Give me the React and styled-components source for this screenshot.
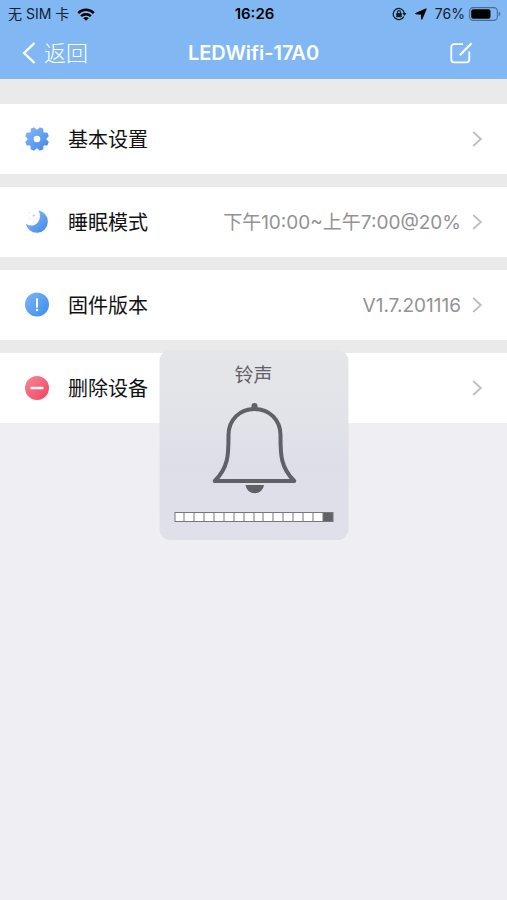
import styled, { createGlobalStyle } from "styled-components";

const GlobalStyle = createGlobalStyle`
  * {
    box-sizing: border-box;
  }

  body {
    margin: 0;
    background: #eeeef3;
    font-family: Inter, "Noto Sans CJK SC", sans-serif;
  }

  button {
    margin: 0;
    border: none;
    background: none;
    font-family: inherit;
    cursor: pointer;
  }

  svg {
    display: block;
    flex: none;
  }
`;

const Header = styled.header`
  background: #81b8f3;
`;

const StatusBar = styled.div`
  display: grid;
  grid-template-columns: 1fr auto 1fr;
  align-items: center;
  height: 28px;
  padding: 0 6px 0 8px;
  font-size: 14px;
  line-height: 20px;
  color: #10202f;
`;

const StatusGroup = styled.div`
  display: flex;
  align-items: center;
  justify-content: ${(p) => (p.$end ? "flex-end" : "flex-start")};
  gap: 8px;
`;

const BatteryLevel = styled.span`
  display: flex;
  align-items: center;
  gap: 4px;
`;

const Clock = styled.time`
  font-size: 15px;
  font-weight: 600;
  color: #000;
`;

const NavBar = styled.nav`
  display: grid;
  grid-template-columns: 1fr auto 1fr;
  align-items: center;
  height: 51px;
  padding: 0 22px 2px;
  color: white;
`;

const BackButton = styled.button`
  justify-self: start;
  display: flex;
  align-items: center;
  gap: 8px;
  padding: 0;
  color: white;
  font-size: 22px;
  line-height: 28px;
  font-weight: 300;
`;

const Title = styled.h1`
  margin: 0;
  font-size: 20px;
  line-height: 28px;
  font-weight: 600;
`;

const EditButton = styled.button`
  justify-self: end;
  padding: 0 12px;
  color: white;
`;

const List = styled.main`
  display: flex;
  flex-direction: column;
  gap: 13px;
  padding: 25px 0 0;
  background: #eaeaea;
`;

const Row = styled.button`
  display: flex;
  align-items: center;
  width: 100%;
  height: 70px;
  padding: 0 24px;
  background: white;
  text-align: left;
`;

const RowLabel = styled.span`
  flex: 1;
  padding-top: 2px;
  margin-left: 18px;
  font-size: 20px;
  line-height: 28px;
  color: #111;
`;

const RowValue = styled.span`
  padding-top: 2px;
  margin-right: 11px;
  font-size: 19px;
  line-height: 28px;
  color: #929292;
`;

const Hud = styled.div`
  position: fixed;
  top: 350px;
  left: 50%;
  transform: translateX(-50%);
  display: flex;
  flex-direction: column;
  align-items: center;
  width: 189px;
  height: 190px;
  padding: 12px 15px 18px;
  border-radius: 11px;
  background: linear-gradient(#e4e6e9 0%, #e1e3e8 38%, #dddee8 60%, #dfe0ea 100%);
  color: #606166;
`;

const HudTitle = styled.div`
  font-size: 19px;
  line-height: 28px;
`;

const BellIcon = styled.svg`
  margin-top: 12px;
`;

const Meter = styled.div`
  display: grid;
  grid-template-columns: repeat(16, 1fr);
  gap: 1px;
  width: 100%;
  height: 10px;
  margin-top: auto;
  padding: 1px;
  background: #77777c;
`;

const Cell = styled.span`
  background: ${(p) => (p.$on ? "#606166" : "white")};
`;

function WifiIcon() {
  return (
    <svg width="18" height="13" viewBox="0 0 18 13" fill="none" stroke="#000" strokeWidth="2.5">
      <path d="M1.2 5.1a11 11 0 0 1 15.6 0" />
      <path d="M4.1 8.2a7 7 0 0 1 9.8 0" />
      <path d="M9 12.8 6.2 10.3a4 4 0 0 1 5.6 0z" fill="#000" stroke="none" />
    </svg>
  );
}

function RotationLockIcon() {
  return (
    <svg width="15" height="14" viewBox="0 0 15 14" fill="none" stroke="#10202f">
      <path d="M11.8 9.6A5.6 5.6 0 1 1 12.3 6" strokeWidth="1.3" />
      <path d="M10.2 6h4.4l-2.2 3z" fill="#10202f" stroke="none" />
      <rect x="4.2" y="6" width="5.6" height="4.3" rx=".5" fill="#10202f" stroke="none" />
      <path d="M5.5 6.5V5.2a1.5 1.5 0 0 1 3 0v1.3" strokeWidth="1.2" />
    </svg>
  );
}

function LocationIcon() {
  return (
    <svg width="12" height="12" viewBox="0 0 12 12">
      <path d="M11 1 6.8 11 6.4 6 .9 5.6z" fill="#000" stroke="#000" strokeWidth="1.3" strokeLinejoin="round" />
    </svg>
  );
}

function BatteryIcon() {
  return (
    <svg width="32" height="14" viewBox="0 0 32 14">
      <rect x=".6" y=".6" width="27.8" height="12.8" rx="3.6" fill="none" stroke="#4b6c90" strokeWidth="1.1" />
      <rect x="2.2" y="2.2" width="19.3" height="9.6" rx="2" />
      <path d="M29.8 4.8c2 .6 2 3.8 0 4.4z" fill="#4b6c90" />
    </svg>
  );
}

function BackIcon() {
  return (
    <svg width="14" height="22" viewBox="0 0 14 22" fill="none" stroke="currentColor" strokeWidth="2.4">
      <path d="M12.5 1 2.2 11l10.3 10" />
    </svg>
  );
}

function EditIcon() {
  return (
    <svg width="23" height="22" viewBox="0 0 23 22" fill="none" stroke="currentColor" strokeWidth="1.8">
      <path d="M13 2.2H4A2.7 2.7 0 0 0 1.3 5v12.6a2.7 2.7 0 0 0 2.7 2.7h12.6a2.7 2.7 0 0 0 2.7-2.7V9.4" />
      <path d="M9.8 13.1 21.6 1.3" strokeWidth="2.2" />
    </svg>
  );
}

function Chevron() {
  return (
    <svg width="11" height="16" viewBox="0 0 11 16" fill="none" stroke="#bdbdbd" strokeWidth="1.8">
      <path d="m1.2 1 7.6 7-7.6 7" />
    </svg>
  );
}

function Gradient({ id, from, to }) {
  return (
    <defs>
      <linearGradient id={id} x1="0" y1="0" x2="26" y2="26" gradientUnits="userSpaceOnUse">
        <stop offset="0" stopColor={from} />
        <stop offset="1" stopColor={to} />
      </linearGradient>
    </defs>
  );
}

function GearIcon() {
  const teeth = [22.5, 67.5, 112.5, 157.5, 202.5, 247.5, 292.5, 337.5];
  return (
    <svg width="26" height="26" viewBox="0 0 26 26">
      <Gradient id="gear" from="#8cbdf8" to="#3c84e8" />
      <mask id="teeth">
        <circle cx="13" cy="13" r="9.6" fill="white" />
        {teeth.map((angle) => (
          <path
            key={angle}
            d="M9.6 5 10.8 1.6Q11 1 11.6 1h2.8Q15 1 15.2 1.6L16.4 5z"
            fill="white"
            transform={`rotate(${angle} 13 13)`}
          />
        ))}
        <circle cx="13" cy="13" r="3.3" fill="black" />
      </mask>
      <rect width="26" height="26" fill="url(#gear)" mask="url(#teeth)" />
    </svg>
  );
}

function MoonIcon() {
  return (
    <svg width="26" height="26" viewBox="0 0 26 26">
      <Gradient id="moon" from="#9cc8fb" to="#347de4" />
      <path
        d="M14.5 1.5A11.2 11.2 0 1 1 1.7 14.6C5 17.5 11 17 13.8 13.4 16.500 10 16.6 5 14.5 1.5z"
        fill="url(#moon)"
      />
      <path d="m9.8 4.4.6 1.5 1.5.6-1.5.6-.6 1.5-.6-1.5-1.500-.6 1.500-.6z" fill="#b5d3f8" />
      <circle cx="5.4" cy="3.8" r=".7" fill="#dbe9fc" />
      <circle cx="5.6" cy="9.8" r=".7" fill="#dbe9fc" />
    </svg>
  );
}

function InfoIcon() {
  return (
    <svg width="26" height="26" viewBox="0 0 26 26">
      <Gradient id="info" from="#80b6fa" to="#378be9" />
      <circle cx="13" cy="12.5" r="12" fill="url(#info)" />
      <path d="M13 7v7.9" stroke="white" strokeWidth="1.9" strokeLinecap="round" />
      <circle cx="13" cy="18" r="1.2" fill="white" />
    </svg>
  );
}

function DeleteIcon() {
  return (
    <svg width="26" height="26" viewBox="0 0 26 26">
      <Gradient id="delete" from="#f98c9c" to="#ef4059" />
      <circle cx="13" cy="13" r="12" fill="url(#delete)" />
      <path d="M7.5 13h11" stroke="white" strokeWidth="2.4" strokeLinecap="round" />
    </svg>
  );
}

const rows = [
  { label: "基本设置", icon: <GearIcon /> },
  { label: "睡眠模式", icon: <MoonIcon />, value: "下午10:00~上午7:00@20%" },
  { label: "固件版本", icon: <InfoIcon />, value: "V1.7.201116" },
  { label: "删除设备", icon: <DeleteIcon /> },
];

const volume = 16;

export default function App() {
  return (
    <>
      <GlobalStyle />
      <Header>
        <StatusBar>
          <StatusGroup>
            <span>无 SIM 卡</span>
            <WifiIcon />
          </StatusGroup>
          <Clock>16:26</Clock>
          <StatusGroup $end>
            <RotationLockIcon />
            <LocationIcon />
            <BatteryLevel>
              76%
              <BatteryIcon />
            </BatteryLevel>
          </StatusGroup>
        </StatusBar>
        <NavBar>
          <BackButton>
            <BackIcon />
            返回
          </BackButton>
          <Title>LEDWifi-17A0</Title>
          <EditButton aria-label="编辑">
            <EditIcon />
          </EditButton>
        </NavBar>
      </Header>
      <List>
        {rows.map((row) => (
          <Row key={row.label}>
            {row.icon}
            <RowLabel>{row.label}</RowLabel>
            {row.value && <RowValue>{row.value}</RowValue>}
            <Chevron />
          </Row>
        ))}
      </List>
      <Hud>
        <HudTitle>铃声</HudTitle>
        <BellIcon width="87" height="92" viewBox="-2 0 87 92" fill="none" stroke="currentColor">
          <path
            d="M42 7C27 7 16 18 16 33c0 18 .5 32-13.8 46h79.6C67.500 65 68 51 68 33 68 18 57 7 42 7z"
            strokeWidth="4"
            strokeLinejoin="round"
          />
          <path d="M39 7V4a3 3 0 0 1 6 0v3z" fill="currentColor" stroke="none" />
          <path d="M33 83h18.500a9.300 9.300 0 0 1-18.500 0z" fill="currentColor" stroke="none" />
        </BellIcon>
        <Meter role="meter" aria-label="铃声" aria-valuemin={0} aria-valuemax={16} aria-valuenow={volume}>
          {Array.from({ length: 16 }, (_, i) => (
            <Cell key={i} $on={i + 1 === volume} />
          ))}
        </Meter>
      </Hud>
    </>
  );
}
